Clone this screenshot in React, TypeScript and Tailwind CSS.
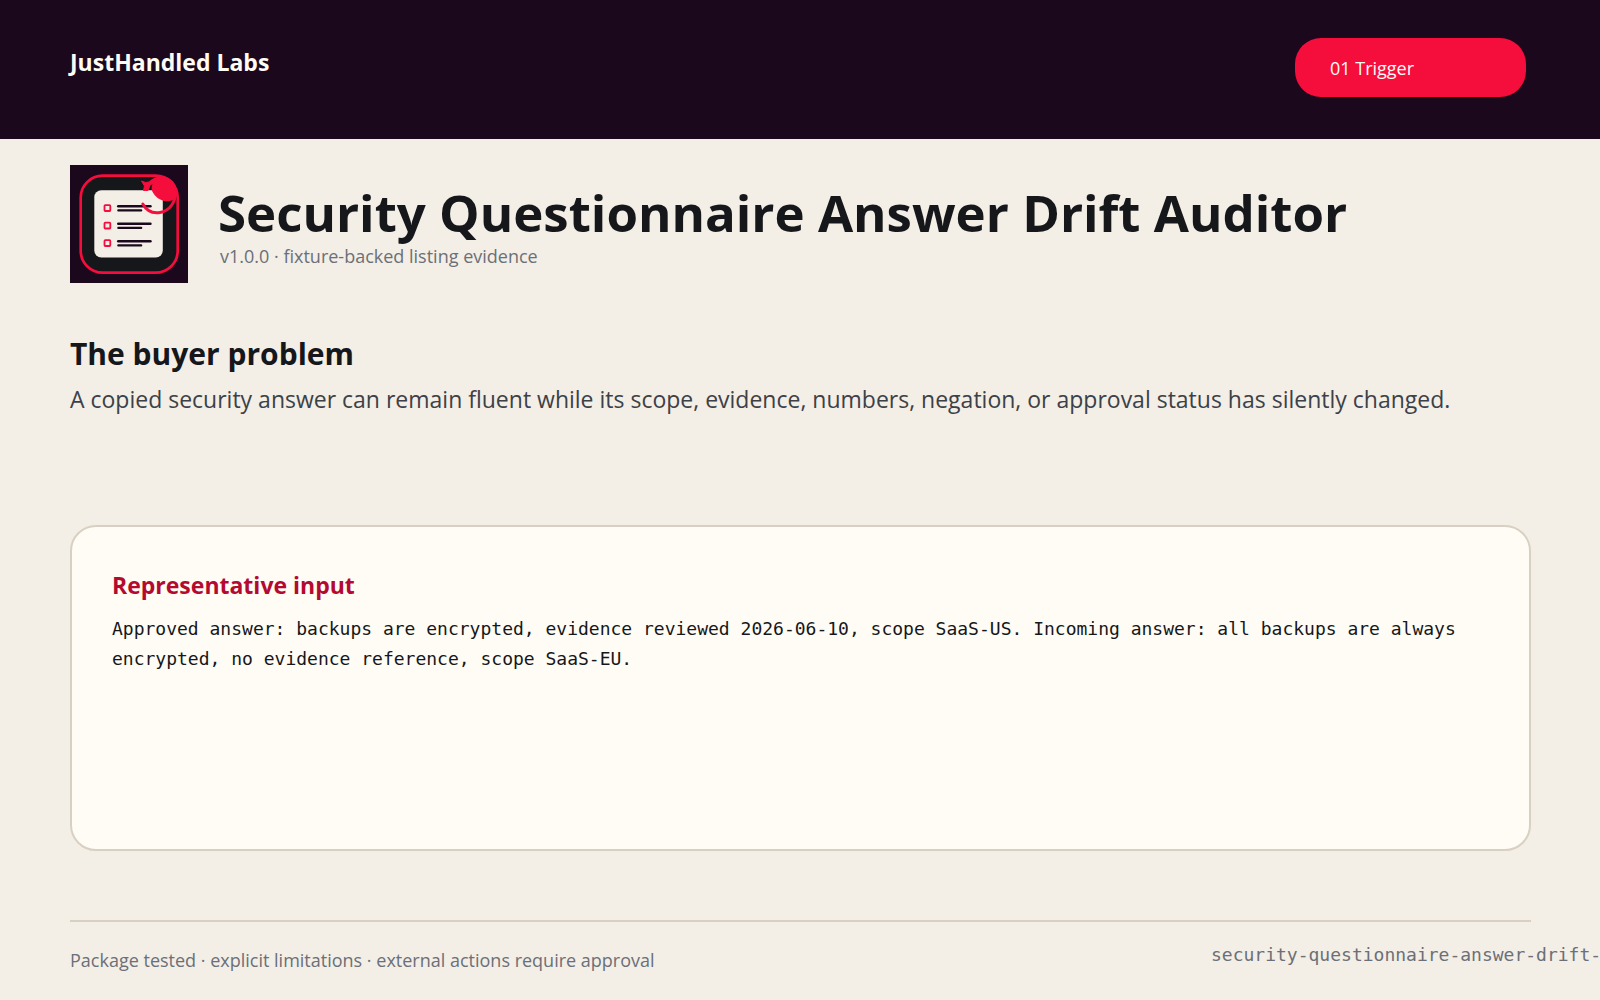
const LISTING = {
  brand: 'JustHandled Labs',
  step: '01 Trigger',
  title: 'Security Questionnaire Answer Drift Auditor',
  meta: 'v1.0.0 · fixture-backed listing evidence',
  slug: 'security-questionnaire-answer-drift-auditor',
};

const ROWS = [0, 17.5, 35];

function ListingIcon() {
  return (
    <svg viewBox="0 0 118 118" className="size-[118px] shrink-0" aria-hidden="true">
      <rect width="118" height="118" fill="#1b081d" />
      <rect x="10.7" y="10.7" width="97" height="97" rx="22" fill="#15171a" stroke="#f50d3c" strokeWidth="2.7" />
      <rect x="24.3" y="25.3" width="68.5" height="67.2" rx="7" fill="#f3eee6" />
      {ROWS.map((y) => (
        <g key={y} transform={`translate(0 ${y})`} fill="none" strokeLinecap="round">
          <rect x="34.5" y="40.2" width="5.8" height="5.8" rx="0.8" stroke="#f50d3c" strokeWidth="1.8" />
          <path d="M48.3 41.2H80.4" stroke="#1b081d" strokeWidth="2.6" />
          <path d="M48.3 45.4H71.2" stroke="#1b081d" strokeWidth="2.2" />
        </g>
      ))}
      {/* Refresh mark */}
      <path d="M78 17.500C83 12.500 88 11 93 11.300C101 12 107 19 107 27C107 30.500 105.500 33.500 104 34.500C98 38 90 36 85.500 31C82 27 80.500 23.500 82.500 19.500L79 20Z" fill="#f50d3c" />
      <path d="M71.500 16L75.500 17.500L83.500 16.500L80 20.500L78 25.500L73.500 25.500L74.500 21Z" fill="#f50d3c" stroke="#f50d3c" strokeLinejoin="round" />
      <path d="M72.800 39C77 46.500 84 48.500 90 47.500C100 46 105.500 37 105.500 27" fill="none" stroke="#f50d3c" strokeWidth="2.9" strokeLinecap="round" />
    </svg>
  );
}

function App() {
  return (
    <div className="flex min-h-screen flex-col overflow-hidden bg-[#f3eee6] font-['Open_Sans','Noto_Sans',sans-serif] text-[#15171a]">
      {/* Header */}
      <header className="flex h-[139px] items-start justify-between bg-[#1b081d] pl-[70px] pr-[74px]">
        <p className="mt-[46px] text-[23px] leading-8 font-bold text-[#fffcf5]">{LISTING.brand}</p>
        <div className="mt-[38px] flex h-[59px] w-[231px] items-center rounded-[26px] bg-[#f50d3c] px-[35px] pt-0.5 text-[18px] text-[#fffcf5]">
          {LISTING.step}
        </div>
      </header>

      <main className="flex flex-1 flex-col pl-[70px] pr-[69px] pt-[26px]">
        {/* Listing title */}
        <div className="flex items-start gap-[30px]">
          <ListingIcon />
          <div className="pt-4">
            <h1 className="text-[51px] leading-[62px] font-bold whitespace-nowrap">{LISTING.title}</h1>
            <p className="pl-0.5 text-[18px] leading-[26px] text-[#6b7078]">{LISTING.meta}</p>
          </div>
        </div>

        {/* Problem */}
        <section className="mt-12">
          <h2 className="text-[30px] leading-[46px] font-bold">The buyer problem</h2>
          <p className="text-[23px] leading-[44px] text-[#3c4148]">
            A copied security answer can remain fluent while its scope, evidence, numbers, negation, or approval status has silently changed.
          </p>
        </section>

        {/* Sample input */}
        <section className="mt-[104px] h-[326px] rounded-[26px] border-2 border-[#d8d0c3] bg-[#fffcf5] px-10 pt-10">
          <h2 className="text-[23px] leading-9 font-bold text-[#b50a30]">Representative input</h2>
          <p className="mt-[11px] font-['DejaVu_Sans_Mono',monospace] text-[18px] leading-[30px]">
            Approved answer: backups are encrypted, evidence reviewed 2026-06-10, scope SaaS-US. Incoming answer: all backups are always encrypted, no evidence reference, scope SaaS-EU.
          </p>
        </section>
      </main>

      <footer className="ml-[70px] mr-[69px] flex h-20 items-start justify-between border-t-2 border-[#d8d0c3] text-[18px] leading-6 text-[#6b7078]">
        <p className="mt-[26px]">Package tested · explicit limitations · external actions require approval</p>
        <p className="mt-[21px] w-80 font-['DejaVu_Sans_Mono',monospace] whitespace-nowrap">{LISTING.slug}</p>
      </footer>
    </div>
  );
}

export default App;
